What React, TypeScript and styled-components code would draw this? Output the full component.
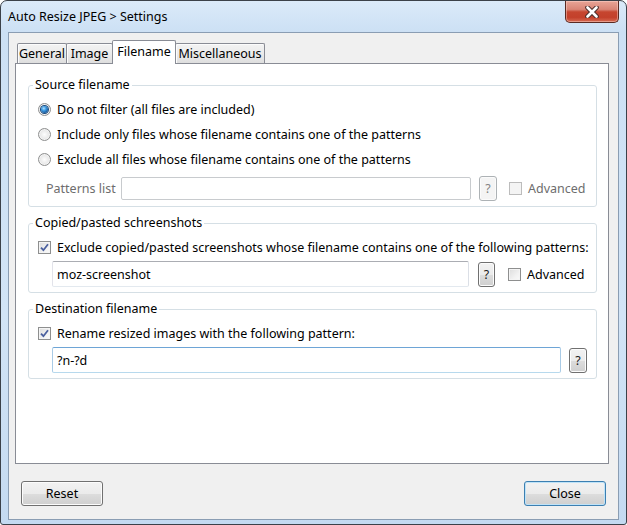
import React from "react";
import styled, { createGlobalStyle } from "styled-components";

const GlobalStyle = createGlobalStyle`
  html, body {
    margin: 0;
    padding: 0;
    background: #fff;
  }
  body {
    font-family: "Noto Sans", "Open Sans", sans-serif;
    font-size: 12.5px;
    color: #000;
  }
  * {
    box-sizing: border-box;
  }
`;

const Window = styled.div`
  width: 627px;
  height: 525px;
  display: flex;
  flex-direction: column;
  border: 1px solid #3b4149;
  border-radius: 7px 7px 3px 3px;
  background: linear-gradient(180deg, #dbeaf9 0%, #cce0f4 6%, #d2e4f6 60%, #c4daf1 100%);
  overflow: hidden;
`;

const TitleBar = styled.div`
  height: 31px;
  flex: none;
  display: flex;
  align-items: flex-start;
  justify-content: space-between;
  padding-left: 7px;
`;

const Title = styled.div`
  align-self: center;
  color: #000;
`;

const CloseBox = styled.div`
  width: 54px;
  height: 22px;
  margin-right: 7px;
  display: flex;
  align-items: center;
  justify-content: center;
  border: 1px solid #5a2a22;
  border-top: none;
  border-radius: 0 0 5px 5px;
  background: linear-gradient(
    180deg,
    #e8a597 0%,
    #d98576 40%,
    #c6452f 52%,
    #c3402b 78%,
    #d66a52 100%
  );
  box-shadow: inset 0 0 0 1px rgba(255, 220, 210, 0.45);
`;

const Client = styled.div`
  flex: 1;
  margin: 0 7px 4px 7px;
  display: flex;
  flex-direction: column;
  padding: 7px 9px 0 6px;
  background: #f0f0f0;
  border: 1px solid #8a9db3;
`;

const TabStrip = styled.div`
  display: flex;
  align-items: flex-end;
  padding-left: 2px;
  height: 23px;
  flex: none;
`;

const Tab = styled.div<{ $active?: boolean; $w: number }>`
  width: ${(p) => p.$w}px;
  height: ${(p) => (p.$active ? 24 : 20)}px;
  margin-left: -1px;
  margin-bottom: ${(p) => (p.$active ? -1 : 0)}px;
  position: relative;
  z-index: ${(p) => (p.$active ? 1 : 0)};
  display: flex;
  align-items: center;
  justify-content: center;
  padding-bottom: ${(p) => (p.$active ? 2 : 0)}px;
  border: 1px solid #898c95;
  border-bottom: none;
  border-radius: 2px 2px 0 0;
  background: ${(p) =>
    p.$active ? "#fff" : "linear-gradient(180deg, #f3f3f3 0%, #ebebeb 50%, #dedede 100%)"};
  box-shadow: ${(p) => (p.$active ? "none" : "inset 1px 1px 0 #fcfcfc")};
  white-space: nowrap;
  &:first-child {
    margin-left: 0;
  }
`;

const Panel = styled.div`
  flex: 1;
  background: #fff;
  border: 1px solid #898c95;
  padding: 13px 11px 0 12px;
  display: flex;
  flex-direction: column;
`;

const Group = styled.fieldset`
  margin: 0;
  padding: 0;
  min-width: 0;
  border: 1px solid #d5dfe5;
  border-radius: 3px;
  & + & {
    margin-top: 8px;
  }
`;

const Legend = styled.legend`
  margin-left: 4px;
  padding: 0 2px;
  line-height: 16px;
  color: #000;
`;

const Body = styled.div`
  padding: 4px 9px 5px 9px;
  display: flex;
  flex-direction: column;
`;

const Row = styled.div<{ $h?: number; $mt?: number; $indent?: number }>`
  display: flex;
  align-items: center;
  height: ${(p) => p.$h ?? 25}px;
  margin-top: ${(p) => p.$mt ?? 0}px;
  padding-left: ${(p) => p.$indent ?? 0}px;
  white-space: nowrap;
`;

const OptionLabel = styled.span<{ $disabled?: boolean }>`
  margin-left: 6px;
  color: ${(p) => (p.$disabled ? "#6d6d6d" : "#000")};
`;

const RadioRing = styled.span`
  width: 13px;
  height: 13px;
  flex: none;
  border-radius: 50%;
  border: 1px solid #8e8f8f;
  background: radial-gradient(circle at 50% 50%, #fdfdfd 0%, #e9e9e9 55%, #d2d2d2 100%);
  display: inline-flex;
  align-items: center;
  justify-content: center;
  box-shadow: inset 0 0 0 1px #f4f4f4;
`;

const RadioDot = styled.span`
  width: 7px;
  height: 7px;
  border-radius: 50%;
  background: radial-gradient(circle at 40% 35%, #b4e2ff 0%, #3d9ae2 35%, #13569a 75%, #0c3c70 100%);
  box-shadow: 0 0 0 1px #1b4a7c;
`;

const CheckBox = styled.span<{ $disabled?: boolean }>`
  width: 13px;
  height: 13px;
  flex: none;
  display: inline-flex;
  align-items: center;
  justify-content: center;
  border: 1px solid ${(p) => (p.$disabled ? "#bcbcbc" : "#8e8f8f")};
  background: ${(p) =>
    p.$disabled ? "#f4f4f4" : "linear-gradient(135deg, #dcdcdc 0%, #f1f1f1 60%, #fafafa 100%)"};
  box-shadow: inset 0 0 0 1px #f4f4f4;
`;

const FieldLabel = styled.span<{ $w: number }>`
  width: ${(p) => p.$w}px;
  flex: none;
  color: #6d6d6d;
`;

const TextBox = styled.div<{ $w: number; $h?: number; $focus?: boolean; $disabled?: boolean; $ml?: number }>`
  width: ${(p) => p.$w}px;
  height: ${(p) => p.$h ?? 26}px;
  flex: none;
  margin-left: ${(p) => p.$ml ?? 0}px;
  display: flex;
  align-items: center;
  padding-left: 4px;
  background: #fff;
  border: 1px solid;
  border-radius: 2px;
  border-color: ${(p) =>
    p.$focus
      ? "#6ea5d6 #a9cbe6 #b7d9ed #a9cbe6"
      : p.$disabled
      ? "#c8cbce"
      : "#abadb3 #dbdfe6 #e3e9ef #e2e3ea"};
  color: #000;
`;

const HelpButton = styled.div<{ $w?: number; $disabled?: boolean; $ml: number }>`
  width: ${(p) => p.$w ?? 18}px;
  height: 25px;
  flex: none;
  margin-left: ${(p) => p.$ml}px;
  display: flex;
  align-items: center;
  justify-content: center;
  border: 1px solid ${(p) => (p.$disabled ? "#adb2b5" : "#707070")};
  border-radius: 3px;
  color: ${(p) => (p.$disabled ? "#838383" : "#1a1a1a")};
  background: ${(p) =>
    p.$disabled
      ? "#f4f4f4"
      : "linear-gradient(180deg, #f2f2f2 0%, #ebebeb 50%, #dddddd 51%, #cfcfcf 100%)"};
  box-shadow: inset 0 0 0 1px ${(p) => (p.$disabled ? "#fbfbfb" : "#fcfcfc")};
`;

const Advanced = styled.span<{ $ml: number; $disabled?: boolean }>`
  display: flex;
  align-items: center;
  margin-left: ${(p) => p.$ml}px;
  color: ${(p) => (p.$disabled ? "#6d6d6d" : "#000")};
`;

const Footer = styled.div`
  flex: none;
  height: 55px;
  display: flex;
  justify-content: space-between;
  align-items: flex-start;
  padding: 17px 3px 0 6px;
`;

const PushButton = styled.button<{ $default?: boolean }>`
  width: 82px;
  height: 25px;
  font-family: inherit;
  font-size: 12.5px;
  color: #000;
  padding: 0 0 1px;
  border: 1px solid ${(p) => (p.$default ? "#3c7fb1" : "#707070")};
  border-radius: 3px;
  background: linear-gradient(180deg, #f2f2f2 0%, #ebebeb 50%, #dddddd 51%, #cfcfcf 100%);
  box-shadow: inset 0 0 0 1px ${(p) => (p.$default ? "#bfe3f8" : "#fcfcfc")};
`;

const CloseGlyph = () => (
  <svg width="16" height="12" viewBox="0 0 16 12">
    <path d="M3.5 1.5 L12.5 10.5 M12.5 1.5 L3.5 10.5" stroke="#4a2d2a" strokeWidth="4.6" strokeLinecap="round" />
    <path d="M3.5 1.5 L12.5 10.5 M12.5 1.5 L3.5 10.5" stroke="#fff" strokeWidth="2.6" strokeLinecap="round" />
  </svg>
);

const Check = () => (
  <svg width="9" height="9" viewBox="0 0 9 9">
    <path d="M1 4.6 L3.4 7.2 L8 1.2" fill="none" stroke="#4a5f9e" strokeWidth="1.8" />
  </svg>
);

const Radio: React.FC<{ checked?: boolean }> = ({ checked }) => (
  <RadioRing>{checked && <RadioDot />}</RadioRing>
);

const App: React.FC = () => {
  return (
    <>
      <GlobalStyle />
      <Window>
        <TitleBar>
          <Title>Auto Resize JPEG &gt; Settings</Title>
          <CloseBox>
            <CloseGlyph />
          </CloseBox>
        </TitleBar>
        <Client>
          <TabStrip>
            <Tab $w={50}>General</Tab>
            <Tab $w={47}>Image</Tab>
            <Tab $w={64} $active>
              Filename
            </Tab>
            <Tab $w={90}>Miscellaneous</Tab>
          </TabStrip>
          <Panel>
            <Group>
              <Legend>Source filename</Legend>
              <Body>
                <Row>
                  <Radio checked />
                  <OptionLabel>Do not filter (all files are included)</OptionLabel>
                </Row>
                <Row>
                  <Radio />
                  <OptionLabel>Include only files whose filename contains one of the patterns</OptionLabel>
                </Row>
                <Row>
                  <Radio />
                  <OptionLabel>Exclude all files whose filename contains one of the patterns</OptionLabel>
                </Row>
                <Row $h={26} $mt={3} $indent={8}>
                  <FieldLabel $w={75}>Patterns list</FieldLabel>
                  <TextBox $w={350} $h={23} $disabled />
                  <HelpButton $ml={8} $disabled>
                    ?
                  </HelpButton>
                  <Advanced $ml={12} $disabled>
                    <CheckBox $disabled />
                    <OptionLabel $disabled>Advanced</OptionLabel>
                  </Advanced>
                </Row>
              </Body>
            </Group>

            <Group>
              <Legend>Copied/pasted schreenshots</Legend>
              <Body>
                <Row>
                  <CheckBox>
                    <Check />
                  </CheckBox>
                  <OptionLabel>
                    Exclude copied/pasted screenshots whose filename contains one of the following patterns:
                  </OptionLabel>
                </Row>
                <Row $h={26} $mt={1}>
                  <TextBox $w={417} $ml={14}>
                    moz-screenshot
                  </TextBox>
                  <HelpButton $w={17} $ml={9}>
                    ?
                  </HelpButton>
                  <Advanced $ml={13}>
                    <CheckBox />
                    <OptionLabel>Advanced</OptionLabel>
                  </Advanced>
                </Row>
              </Body>
            </Group>

            <Group>
              <Legend>Destination filename</Legend>
              <Body>
                <Row>
                  <CheckBox>
                    <Check />
                  </CheckBox>
                  <OptionLabel>Rename resized images with the following pattern:</OptionLabel>
                </Row>
                <Row $h={26} $mt={1}>
                  <TextBox $w={509} $ml={14} $focus>
                    ?n-?d
                  </TextBox>
                  <HelpButton $ml={8}>?</HelpButton>
                </Row>
              </Body>
            </Group>
          </Panel>
          <Footer>
            <PushButton>Reset</PushButton>
            <PushButton $default>Close</PushButton>
          </Footer>
        </Client>
      </Window>
    </>
  );
};

export default App;
